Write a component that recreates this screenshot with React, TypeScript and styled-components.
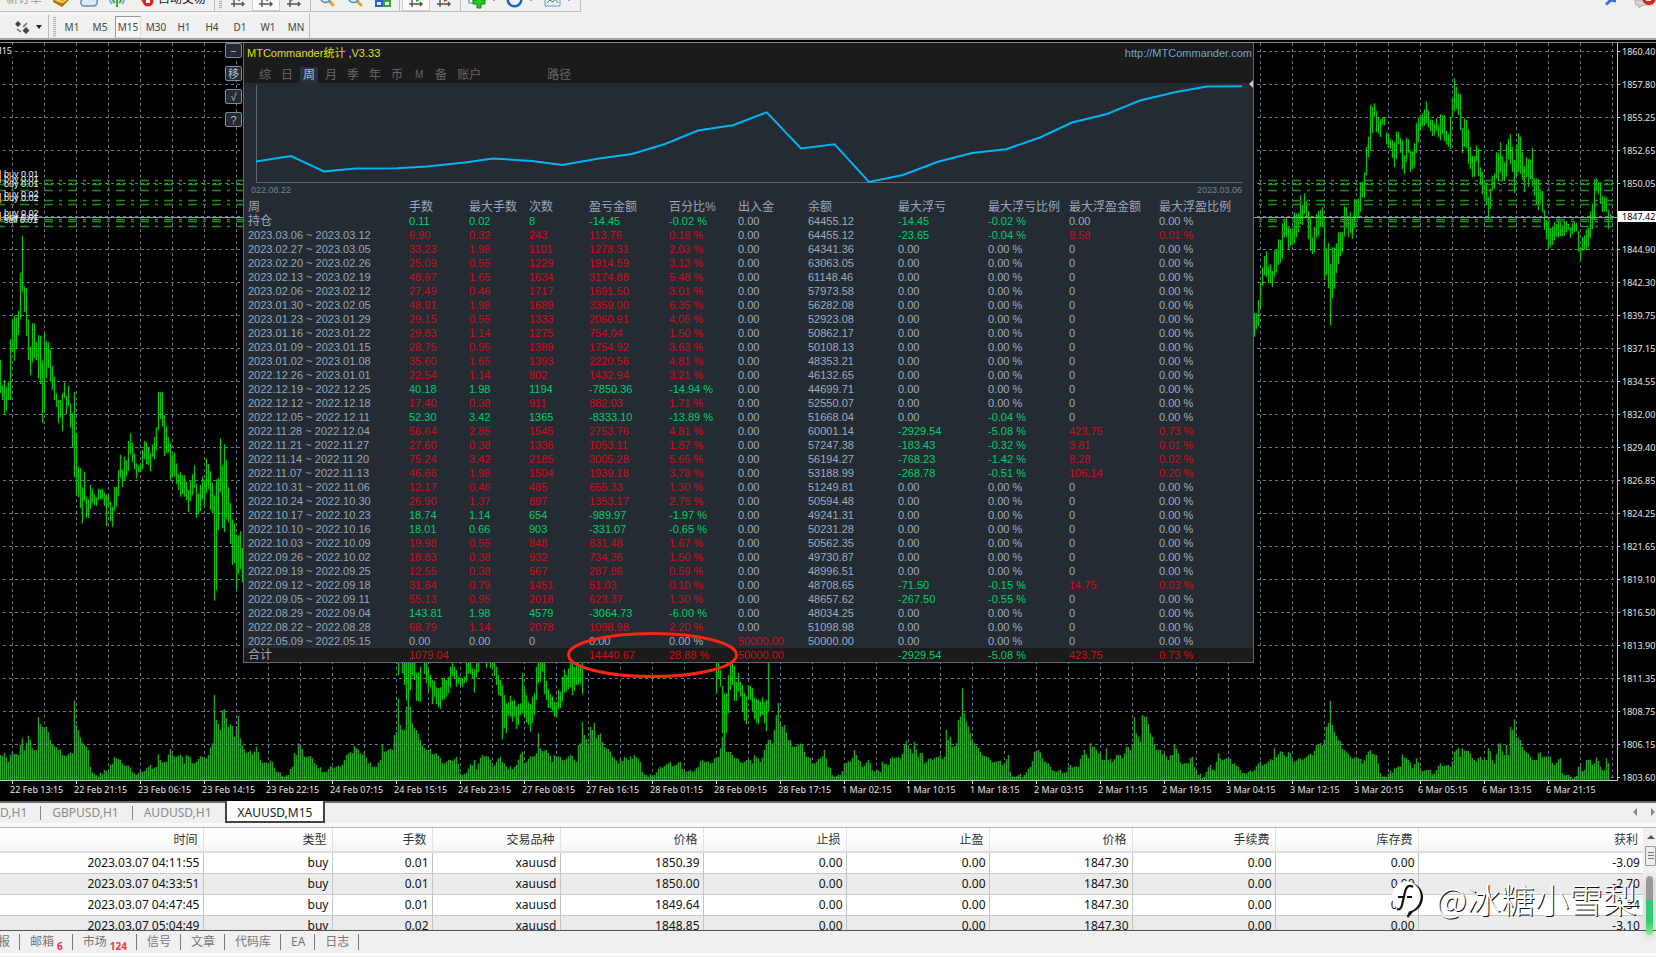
import React from "react";
import styled, { createGlobalStyle, css } from "styled-components";

const Global = createGlobalStyle`
  * { box-sizing: border-box; }
  body { margin: 0; background: #f0f0f0; overflow-x: hidden; }
  button { font: inherit; color: inherit; background: none; border: 0; padding: 0; margin: 0; }
  table { border-collapse: collapse; border-spacing: 0; }
  svg { display: block; }
`;

const uiFont = `"Noto Sans", "Noto Sans CJK SC", sans-serif`;
const panelFont = `"Liberation Sans", "Noto Sans CJK SC", sans-serif`;

/* ---------- data ---------- */

type Bar = [number, number];

/** Bars are stored as "high-low" pairs, three units to a pixel, one bar every 2px. */
const parseBars = (src: string): Bar[] =>
  src.trim().split(/\s+/).map((p) => p.split("-").map(Number) as Bar);

const barPath = (x0: number, y0: number, src: string) =>
  parseBars(src)
    .map(([hi, lo], i) => `M${x0 + i * 2 + 0.5} ${(y0 + hi / 3).toFixed(1)}V${(y0 + lo / 3).toFixed(1)}`)
    .join("");

const leftA = `960-1060 1035-1080 1020-1125 1040-1113 1025-1080 897-1080 837-935 827-963 832-927 812-885 698-837
587-755 739-815 745-888 838-960 920-1005 850-968 850-955 905-960 885-1015 887-1032 962-1148 880-1118 905-1013
905-983 928-1025 977-1050 1010-1080 1060-1100 1080-1150 1080-1133 1060-1173 1027-1075 1067-1123 1037-1098
1090-1163 1120-1225`;

const leftB = `5-262 130-315 230-322 233-355 292-400 247-334 320-384 328-384 284-357 296-340 313-346 322-348 296-330
298-328 296-328 308-348 313-408 316-345 335-393 350-411 290-363 290-350 241-317 194-265 238-292 200-273 211-259
153-243 130-193 158-217 190-237 220-265 226-247 222-247 180-238 153-208 155-223 173-225 190-244 163-202 140-208
112-182 5-120 7-88 7-110 75-198 107-190 142-187 158-273 193-262 187-260 220-283 253-300 247-320 256-312 256-320
275-330 300-367 272-333 253-316 226-293 281-384 310-372 284-364 260-328 268-350 205-310 222-298 244-360 278-370
316-632 268-600 265-420 145-307 226-414 163-427 211-388 292-396 338-462 388-526 400-520 434-598 436-552 424-538
474-577`;

const middle = `180-226 180-181 180-220 180-255 180-302 180-325 180-270 180-228 180-240 218-304 218-304 200-305 180-181
180-222 180-250 210-275 225-262 240-312 243-292 262-312 265-320 262-327 235-300 233-298 240-290 230-280 200-262
180-228 200-235 210-260 230-250 232-255 235-262 230-250 180-245 180-222 180-222 205-235 208-278 180-232 180-215
180-181 180-181 180-181 180-205 180-181 180-205 180-200 180-228 200-255 225-285 240-288 255-418 285-385 310-400
307-348 287-350 302-365 300-350 318-388 312-375 310-345 220-340 265-350 285-368 307-375 312-395 290-368 280-345
200-300 180-250 180-245 180-215 180-283 243-300 267-325 282-325 290-335 305-350 305-350 270-328 275-325 230-305
208-278 225-275 205-268 180-262 180-285 200-272 180-255 180-255 195-250 180-283`;

const middleB = `180-280 180-235 210-260 258-400 280-415 280-398 225-340 180-270 180-255 198-303 245-303 220-275
245-290 255-335 280-362 290-373 255-295 258-300 265-335 293-357 295-370 300-373 305-350 292-345 305-370 300-393
180-335`;

const right = `940-1010 940-988 900-978 845-922 802-857 768-825 754-830 797-850 793-848 812-861 750-830 748-818 718-795
720-788 670-776 660-712 655-712 679-750 685-738 685-735 637-730 640-712 640-697 586-672 615-675 580-642 604-655
634-718 655-752 713-762 680-757 643-713 634-708 630-682 622-682 650-840 745-825 728-865 793-976 742-895 742-867
730-820 697-793 697-768 697-757 619-710 622-685 655-712 637-700 655-716 598-685 598-655 596-652 547-636 545-592
517-594 440-526 410-472 314-452 320-400 310-350 333-397 353-403 358-411 352-375 353-376 397-433 403-445 418-446
421-474 427-502 394-478 396-433 413-458 421-508 465-522 413-485 418-460 452-516 454-508 430-500 370-460 352-427
347-393 340-380 328-378 304-370 332-382 358-393 360-408 370-405 355-392 376-412 343-420 346-402 344-424 392-434
402-440 350-448 294-352 235-333 260-328 280-345 283-390 385-460 355-440 361-444 388-492 440-507 468-532 468-530
436-485 446-528 502-555 517-583 540-600 553-615 590-660 565-627 527-570 521-566 457-535 460-545 427-518 468-543
487-543 433-530 416-478 403-492 442-516 480-580 433-530 400-516 410-522 457-540 498-576 472-532 478-560 478-538
445-560 535-587 535-612 538-630 568-608 573-636 630-690 660-717 664-746 685-740 679-735 667-720 672-710 655-714
667-708 675-708 664-708 664-697 672-690 682-714 670-703 664-697 668-694 694-755 742-783 712-752 706-750 688-750
684-740 634-714 611-688 538-660 535-570 547-583 547-612 588-636 590-634 592-636 630-688 643-660`;

const candlePath =
  barPath(0, 40, leftA) +
  barPath(74, 390, leftB) +
  barPath(398, 600, middle) +
  barPath(716, 600, middleB) +
  barPath(1254, 0, right);

/** Volume outline as x:top, tops in thirds of a pixel below y=600. */
const volumeKeys = `0:465 4:458 8:485 12:455 18:465 22:415 24:450 28:407 32:445 36:450 38:352 40:373 46:380 50:420 58:450
66:468 72:460 74:302 76:375 80:412 88:450 90:500 94:522 98:530 104:510 108:515 114:470 122:490 130:503 136:525
142:515 148:500 156:500 158:463 160:480 166:485 170:448 174:470 182:470 184:490 186:465 194:490 202:470 206:475
208:465 212:430 214:284 216:360 220:390 222:330 224:328 228:380 232:378 234:410 238:348 240:415 246:460 254:455
256:440 260:480 268:490 272:485 276:515 282:528 288:525 292:500 294:460 296:465 298:430 302:448 304:470 312:475
318:505 326:515 332:500 340:500 346:465 352:460 354:437 360:460 364:455 368:490 376:500 380:480 382:435 384:455
392:450 394:405 396:395 398:295 400:375 404:390 406:320 410:320 412:370 416:390 420:420 426:450 436:460 442:490
450:480 456:470 460:520 466:518 474:480 476:508 482:465 488:470 492:500 500:470 504:490 508:508 516:495 522:455
524:490 532:470 536:460 538:400 540:445 546:450 552:485 554:465 562:480 572:468 576:485 578:435 580:430 582:365
584:405 588:430 590:380 592:390 594:368 596:415 600:400 604:440 610:455 618:490 624:470 628:480 634:465 640:485
642:515 648:530 654:525 660:500 668:490 676:495 680:485 684:515 692:515 698:500 702:480 710:490 714:475 718:470
720:445 722:410 724:400 726:455 732:465 740:485 746:480 752:490 754:465 760:485 764:450 768:420 772:430 776:345
778:308 780:372 784:375 788:420 794:440 802:435 806:470 814:490 820:475 824:450 828:500 834:530 840:525 844:490
850:485 854:450 858:480 862:500 868:480 872:510 880:515 882:485 888:495 892:470 900:475 904:435 906:422 908:445
912:460 914:425 918:470 922:460 924:490 930:475 938:470 944:470 946:390 948:420 950:410 952:440 956:430 958:360
960:350 962:265 964:340 966:365 970:400 974:430 980:455 990:480 1004:490 1008:465 1010:515 1014:530 1024:525
1030:500 1034:455 1038:450 1042:475 1050:500 1056:515 1066:515 1070:495 1078:500 1082:465 1084:450 1088:475
1090:430 1094:440 1098:460 1104:480 1106:445 1108:480 1112:485 1116:465 1122:475 1126:440 1130:450 1132:436
1134:352 1136:400 1140:425 1142:345 1146:350 1150:400 1152:410 1156:450 1164:460 1168:480 1172:465 1174:433
1178:460 1180:485 1188:490 1192:470 1194:500 1198:525 1204:530 1206:515 1210:495 1214:510 1218:460 1220:475
1226:475 1234:490 1240:510 1246:520 1252:515 1258:490 1266:490 1272:480 1274:445 1276:470 1282:455 1286:470
1288:455 1294:485 1300:475 1306:470 1312:465 1316:435 1322:435 1324:420 1326:380 1328:368 1330:302 1332:375
1334:395 1338:420 1344:450 1350:470 1356:470 1362:490 1366:465 1370:450 1376:465 1380:520 1386:530 1394:505
1400:500 1402:463 1408:480 1412:505 1416:475 1420:505 1426:510 1434:520 1440:490 1450:500 1454:455 1458:443
1460:470 1462:445 1470:460 1476:485 1480:470 1486:480 1488:445 1494:490 1498:435 1500:430 1504:465 1506:435
1508:465 1510:380 1512:390 1514:358 1516:412 1520:420 1524:450 1530:470 1536:480 1538:460 1544:470 1550:470
1554:495 1560:475 1562:520 1570:530 1576:528 1578:500 1584:510 1586:480 1594:490 1596:472 1600:500 1604:510
1606:475 1608:490`;

const volumePath = (() => {
  const keys = volumeKeys.trim().split(/\s+/).map((k) => k.split(":").map(Number));
  let d = "";
  let k = 0;
  for (let x = 0; x <= 1608; x += 2) {
    while (k < keys.length - 2 && keys[k + 1][0] <= x) k += 1;
    const [xa, ya] = keys[k];
    const [xb, yb] = keys[k + 1];
    const t = Math.min(1, (x - xa) / (xb - xa));
    const ripple = t === 0 || t === 1 ? 0 : ((x * 7) % 5) * 3 - 6;
    d += `M${x + 0.5} ${(600 + (ya + (yb - ya) * t + ripple) / 3).toFixed(1)}V781`;
  }
  return d;
})();

const prices = ["1860.40", "1857.80", "1855.25", "1852.65", "1850.05", "1847.42", "1844.90", "1842.30", "1839.75",
  "1837.15", "1834.55", "1832.00", "1829.40", "1826.85", "1824.25", "1821.65", "1819.10", "1816.50", "1813.90",
  "1811.35", "1808.75", "1806.15", "1803.60"];

const times = ["22 Feb 13:15", "22 Feb 21:15", "23 Feb 06:15", "23 Feb 14:15", "23 Feb 22:15", "24 Feb 07:15",
  "24 Feb 15:15", "24 Feb 23:15", "27 Feb 08:15", "27 Feb 16:15", "28 Feb 01:15", "28 Feb 09:15", "28 Feb 17:15",
  "1 Mar 02:15", "1 Mar 10:15", "1 Mar 18:15", "2 Mar 03:15", "2 Mar 11:15", "2 Mar 19:15", "3 Mar 04:15",
  "3 Mar 12:15", "3 Mar 20:15", "6 Mar 05:15", "6 Mar 13:15", "6 Mar 21:15"];

const statColumns: [string, number][] = [["周", 165], ["手数", 60], ["最大手数", 60], ["次数", 60], ["盈亏金额", 80],
  ["百分比%", 69], ["出入金", 70], ["余额", 90], ["最大浮亏", 90], ["最大浮亏比例", 81], ["最大浮盈金额", 90],
  ["最大浮盈比例", 94]];

const statRows = `持仓|0.11|0.02|8|-14.45|-0.02|0.00|64455.12|-14.45|-0.02|0.00|0.00
2023.03.06 ~ 2023.03.12|6.80|0.32|243|113.76|0.18|0.00|64455.12|-23.65|-0.04|8.58|0.01
2023.02.27 ~ 2023.03.05|33.23|1.98|1101|1278.31|2.03|0.00|64341.36|0.00|0.00|0|0.00
2023.02.20 ~ 2023.02.26|25.09|0.55|1229|1914.59|3.13|0.00|63063.05|0.00|0.00|0|0.00
2023.02.13 ~ 2023.02.19|48.97|1.65|1634|3174.88|5.48|0.00|61148.46|0.00|0.00|0|0.00
2023.02.06 ~ 2023.02.12|27.49|0.46|1717|1691.50|3.01|0.00|57973.58|0.00|0.00|0|0.00
2023.01.30 ~ 2023.02.05|48.91|1.98|1689|3359.00|6.35|0.00|56282.08|0.00|0.00|0|0.00
2023.01.23 ~ 2023.01.29|29.15|0.55|1333|2060.91|4.05|0.00|52923.08|0.00|0.00|0|0.00
2023.01.16 ~ 2023.01.22|29.83|1.14|1275|754.04|1.50|0.00|50862.17|0.00|0.00|0|0.00
2023.01.09 ~ 2023.01.15|28.75|0.95|1389|1754.92|3.63|0.00|50108.13|0.00|0.00|0|0.00
2023.01.02 ~ 2023.01.08|35.60|1.65|1393|2220.56|4.81|0.00|48353.21|0.00|0.00|0|0.00
2022.12.26 ~ 2023.01.01|22.54|1.14|802|1432.94|3.21|0.00|46132.65|0.00|0.00|0|0.00
2022.12.19 ~ 2022.12.25|40.18|1.98|1194|-7850.36|-14.94|0.00|44699.71|0.00|0.00|0|0.00
2022.12.12 ~ 2022.12.18|17.40|0.38|911|882.03|1.71|0.00|52550.07|0.00|0.00|0|0.00
2022.12.05 ~ 2022.12.11|52.30|3.42|1365|-8333.10|-13.89|0.00|51668.04|0.00|-0.04|0|0.00
2022.11.28 ~ 2022.12.04|56.64|2.85|1545|2753.76|4.81|0.00|60001.14|-2929.54|-5.08|423.75|0.73
2022.11.21 ~ 2022.11.27|27.60|0.38|1336|1053.11|1.87|0.00|57247.38|-183.43|-0.32|3.81|0.01
2022.11.14 ~ 2022.11.20|75.24|3.42|2185|3005.28|5.65|0.00|56194.27|-768.23|-1.42|8.28|0.02
2022.11.07 ~ 2022.11.13|46.66|1.98|1504|1939.18|3.78|0.00|53188.99|-268.78|-0.51|106.14|0.20
2022.10.31 ~ 2022.11.06|12.17|0.46|485|655.33|1.30|0.00|51249.81|0.00|0.00|0|0.00
2022.10.24 ~ 2022.10.30|26.90|1.37|897|1353.17|2.75|0.00|50594.48|0.00|0.00|0|0.00
2022.10.17 ~ 2022.10.23|18.74|1.14|654|-989.97|-1.97|0.00|49241.31|0.00|0.00|0|0.00
2022.10.10 ~ 2022.10.16|18.01|0.66|903|-331.07|-0.65|0.00|50231.28|0.00|0.00|0|0.00
2022.10.03 ~ 2022.10.09|19.98|0.55|848|831.48|1.67|0.00|50562.35|0.00|0.00|0|0.00
2022.09.26 ~ 2022.10.02|18.83|0.38|932|734.36|1.50|0.00|49730.87|0.00|0.00|0|0.00
2022.09.19 ~ 2022.09.25|12.55|0.38|567|287.86|0.59|0.00|48996.51|0.00|0.00|0|0.00
2022.09.12 ~ 2022.09.18|31.64|0.79|1451|51.03|0.10|0.00|48708.65|-71.50|-0.15|14.75|0.03
2022.09.05 ~ 2022.09.11|55.13|0.95|2018|623.37|1.30|0.00|48657.62|-267.50|-0.55|0|0.00
2022.08.29 ~ 2022.09.04|143.81|1.98|4579|-3064.73|-6.00|0.00|48034.25|0.00|0.00|0|0.00
2022.08.22 ~ 2022.08.28|68.79|1.14|2078|1098.98|2.20|0.00|51098.98|0.00|0.00|0|0.00
2022.05.09 ~ 2022.05.15|0.00|0.00|0|0.00|0.00|50000.00|50000.00|0.00|0.00|0|0.00`
  .split("\n").map((r) => r.split("|"));

const totals = ["合计", "1079.04", "", "", "14440.67", "28.88", "50000.00", "", "-2929.54", "-5.08", "423.75", "0.73"];

const orderColumns: [string, number | undefined][] = [["时间", 203], ["类型", 129], ["手数", 100], ["交易品种", 128],
  ["价格", 143], ["止损", 143], ["止盈", 143], ["价格", 143], ["手续费", 143], ["库存费", 143], ["获利", undefined]];

const orders = [
  ["2023.03.07 04:11:55", "buy", "0.01", "xauusd", "1850.39", "0.00", "0.00", "1847.30", "0.00", "0.00", "-3.09"],
  ["2023.03.07 04:33:51", "buy", "0.01", "xauusd", "1850.00", "0.00", "0.00", "1847.30", "0.00", "0.00", "-2.70"],
  ["2023.03.07 04:47:45", "buy", "0.01", "xauusd", "1849.64", "0.00", "0.00", "1847.30", "0.00", "0.00", "-2.34"],
  ["2023.03.07 05:04:49", "buy", "0.02", "xauusd", "1848.85", "0.00", "0.00", "1847.30", "0.00", "0.00", "-3.10"],
];

/* ---------- layout ---------- */

const Page = styled.div`
  min-height: 100vh;
  overflow: hidden;
  background: #f0f0f0;
  font-family: ${uiFont};
  font-size: 12px;
  color: #333;
`;

const TopBar = styled.header`
  display: flex;
  justify-content: space-between;
  height: 13px;
  overflow: hidden;
`;

const ToolStrip = styled.div`
  display: flex;
  border: solid #bdbdbd;
  border-width: 0 1px 1px 0;
  height: 12px;
  padding: 0 3px 0 6px;
`;

const ToolRow = styled.div`
  display: flex;
  align-items: center;
  height: 24px;
  margin-top: -13px;
`;

const ToolText = styled.button<{ $muted?: boolean }>`
  display: block;
  line-height: 16px;
  white-space: nowrap;
  margin: ${(p) => (p.$muted ? "0 5px 0 0" : "0 6px 0 -1px")};
  color: ${(p) => (p.$muted ? "#9a9a9a" : "#222")};
`;

const ToolButton = styled.button<{ $wide?: boolean; $pressed?: boolean }>`
  display: flex;
  align-items: center;
  justify-content: center;
  gap: 5px;
  width: ${(p) => (p.$wide ? 38 : 28)}px;
  height: 24px;
  ${(p) => p.$pressed && css`background: #fafafa; border: 1px solid #ccc;`}
`;

const Divider = styled.span<{ $grip?: boolean }>`
  flex: none;
  width: ${(p) => (p.$grip ? 3 : 1)}px;
  height: ${(p) => (p.$grip ? 20 : 24)}px;
  margin: 0 2px;
  background: ${(p) => (p.$grip ? "repeating-linear-gradient(#bbb 0 1px, #e2e2e2 1px 2px)" : "#bbb")};
`;

const CornerTools = styled.div`
  display: flex;
  gap: 16px;
  height: 10px;
`;

const PeriodBar = styled.nav`
  display: flex;
  align-items: center;
  height: 25px;
  padding: 1px 0 0 12px;
  width: 310px;
  border-right: 1px solid #bdbdbd;
  border-top: 1px solid #fbfbfb;
`;

const PeriodButton = styled.button<{ $active?: boolean }>`
  flex: none;
  width: ${(p) => (p.$active ? 26 : 28)}px;
  margin: ${(p) => (p.$active ? "0 1px" : "0")};
  height: 22px;
  font-size: 10px;
  line-height: 20px;
  color: #444;
  text-align: center;
  ${(p) => p.$active && css`background: #f8f8f8; border: 1px solid #aaa; border-color: #999 #ddd #ddd #999;`}
`;

const ShapeTool = styled.button`
  display: flex;
  flex: none;
  align-items: center;
  gap: 4px;
  margin-right: 4px;
`;

const ChartFrame = styled.main`
  border-top: 2px solid #a2a2a2;
  background: #000;
  padding-top: 2px;
`;

const ChartBody = styled.div`
  display: flex;
  border-top: 1px solid #8c8c8c;
  height: 739px;
`;

const Plot = styled.div`
  position: relative;
  flex: 1;
  min-width: 0;
  overflow: hidden;
  border-bottom: 1px solid #c8c8c8;
`;

const PriceAxis = styled.div`
  width: 39px;
  border-left: 1px solid #c8c8c8;
  overflow: hidden;
  color: #e6e6e6;
  font-size: 9px;
`;

const PriceList = styled.ul`
  list-style: none;
  margin: -8px 0 0;
  padding: 0;
`;

const Price = styled.li<{ $current?: boolean }>`
  display: flex;
  align-items: center;
  height: 33px;
  gap: 2px;
  &::before { content: ""; width: 2px; height: 1px; background: #c8c8c8; }
  span {
    line-height: 11px;
    ${(p) => p.$current && css`background: #fff; color: #000; box-shadow: -4px 0 0 #fff, 2px 0 0 #fff;`}
  }
`;

const TimeAxis = styled.ol`
  display: flex;
  list-style: none;
  margin: 0;
  padding: 0 0 0 10px;
  height: 20px;
  overflow: hidden;
  color: #e6e6e6;
  font-size: 9px;
`;

const Time = styled.li`
  flex: 0 0 64px;
  line-height: 11px;
  white-space: nowrap;
  &::before { content: ""; display: block; width: 1px; height: 3px; margin-left: 2px; background: #c8c8c8; }
`;

const SideButtons = styled.div`
  position: absolute;
  left: 225px;
  top: 0;
  display: grid;
  grid-auto-rows: 15px;
  gap: 8px;
`;

const SideButton = styled.button`
  width: 17px;
  border: 1px solid #7d8ca3;
  border-radius: 2px;
  background: #242b33;
  color: #b4bfcf;
  font: 11px/12px ${panelFont};
`;

const Panel = styled.section`
  position: absolute;
  left: 243px;
  top: 0;
  width: 1011px;
  background: #242b33;
  border: solid #5c687a;
  border-width: 0 1px 1px;
  color: #9aa7bc;
  font: 11px/14px ${panelFont};
`;

const PanelHead = styled.div`
  height: 40px;
  background: #1b1b1b;
`;

const PanelTitle = styled.div`
  display: flex;
  justify-content: space-between;
  padding: 0 1px 0 3px;
  line-height: 20px;
  height: 24px;
  color: #e0e000;
  a { color: #6fa8cc; text-decoration: none; }
`;

const PanelTabs = styled.div`
  display: flex;
  gap: 4px;
  padding-left: 12px;
`;

const PanelTab = styled.button<{ $active?: boolean; $small?: boolean; $gap?: number }>`
  min-width: 18px;
  height: 16px;
  border-radius: 2px;
  padding: 0 3px;
  margin-left: ${(p) => p.$gap ?? 0}px;
  font-size: ${(p) => (p.$small ? 10 : 12)}px;
  line-height: 16px;
  background: ${(p) => (p.$active ? "#28323e" : "none")};
  color: ${(p) => (p.$active ? "#a9bcda" : "#666")};
`;

const Equity = styled.svg`
  overflow: visible;
`;

const DateRange = styled.div`
  display: flex;
  justify-content: space-between;
  height: 16px;
  padding: 0 11px 0 7px;
  font-size: 9px;
  line-height: 13px;
  color: #758296;
`;

const StatTable = styled.table`
  table-layout: fixed;
  width: 100%;
  th, td { height: 14px; line-height: 14px; padding: 0; text-align: left; font-weight: 400; white-space: nowrap; overflow: visible; }
  th { font-size: 12px; }
  tbody th { font-size: 11px; }
  th:first-child { padding-left: 4px; }
  tr { height: 14px; }
  tfoot tr { background: #1b1b1b; }
`;

const cjkSize = css`&& { font-size: 12px; }`;
const RowHead = styled.th<{ $cjk?: boolean }>`${(p) => p.$cjk && cjkSize}`;

const toneColor = { gain: "#d00d16", loss: "#00cf68", flat: "#9fabbf" };
type Tone = keyof typeof toneColor;
const Cell = styled.td<{ $tone: Tone }>`color: ${(p) => toneColor[p.$tone]};`;

const Mark = styled.svg`
  position: absolute;
  left: 566px;
  top: 588px;
`;

const ChartTabs = styled.nav`
  display: flex;
  height: 26px;
  border-top: 2px solid #6a6a6a;
  box-shadow: inset 0 -4px 0 #f9f9f9;
  color: #8a8a8a;
`;

const ChartTab = styled.button<{ $active?: boolean }>`
  height: 20px;
  line-height: 20px;
  padding: 0 13px 0 0;
  display: flex;
  align-items: center;
  &:not(:first-child)::before { content: ""; width: 1px; height: 14px; background: #888; margin-right: 11px; }
  ${(p) => p.$active && css`
    &&::before { display: none; }
    height: 22px;
    margin-top: -2px;
    padding: 3px 11px 0;
    background: #fff;
    color: #222;
    border: solid #444;
    border-width: 0 2px 2px;
  `}
`;

const TabArrows = styled.div`
  margin-left: auto;
  display: flex;
  gap: 14px;
  padding: 3px 1px 0 0;
  height: 14px;
  align-items: center;
`;

const Terminal = styled.section`
  position: relative;
`;

const OrdersView = styled.div`
  display: flex;
  height: 104px;
  overflow: hidden;
  border-top: 1px solid #b5b5b5;
  border-bottom: 1px solid #555;
`;

const OrderTable = styled.table`
  table-layout: fixed;
  flex: 1;
  width: 100%;
  min-width: 0;
  height: 108px;
  color: #111;
  th, td { padding: 0; text-align: right; font-weight: 400; white-space: nowrap; border-right: 1px solid #c4c4c4; }
  th { height: 24px; line-height: 23px; padding-right: 5px; color: #333; background: linear-gradient(#fff 45%, #f2f4f6); border-right-color: #e2e4e6; border-bottom: 2px solid #dcdcdc; }
  td { height: 21px; line-height: 20px; padding-right: 3px; background: #fff; border-bottom: 1px solid #c9c9c9; }
  tbody tr:nth-child(even) td { background: #ebebeb; }
  th:last-child, td:last-child { border-right: 0; }
`;

const ScrollColumn = styled.div`
  flex: 0 0 13px;
  background: #f0f0f0;
  display: flex;
  flex-direction: column;
  align-items: center;
  padding-left: 2px;
`;

const ScrollThumb = styled.div`
  width: 11px;
  height: 20px;
  border: 1px solid #999;
  border-radius: 1px;
  margin-top: 6px;
  background: repeating-linear-gradient(#777 0 1px, #eee 1px 3px) center / 6px 8px no-repeat, #eee;
`;

const Level = styled.div`
  position: absolute;
  right: 3px;
  top: 49px;
  width: 7px;
  height: 59px;
  border-radius: 4px;
  background: linear-gradient(#999 0 24px, #2ecc71 24px 45px, #86ee80 100%);
  box-shadow: 0 2px 8px #0003;
`;

const Watermark = styled.div`
  position: absolute;
  right: 19px;
  top: 53px;
  display: flex;
  align-items: center;
  gap: 12px;
  font: 300 34px/36px "Noto Sans CJK SC", sans-serif;
  color: #fff;
  text-shadow: 1px 1px 0 #111;
  pointer-events: none;
`;

const BottomTabs = styled.nav`
  display: flex;
  align-items: center;
  height: 22px;
  color: #777;
`;

const BottomTab = styled.button`
  display: flex;
  align-items: center;
  height: 16px;
  line-height: 16px;
  padding: 0 9px 0 10px;
  gap: 3px;
  border-right: 1px solid #777;
  white-space: nowrap;
  &:first-child { padding-left: 0; margin-left: -2px; }
  b { color: #f23645; font-size: 10px; line-height: 8px; align-self: flex-end; }
`;

const FootStrip = styled.div`
  height: 3px;
  background: #fafafa;
`;

/* ---------- drawings ---------- */

const Caret = () => <svg width="6" height="4" viewBox="0 0 6 4"><path d="M0 0h6L3 4z" fill="#222" /></svg>;

const BookIcon = () => (
  <svg width="18" height="16" viewBox="0 0 18 16"><path d="M1 9l8-6 8 4-7 8z" fill="#e0a526" /><path d="M1 9l9 4 7-6v2l-7 7-9-5z" fill="#b0700f" /><path d="M2 8l9 3 6-4" stroke="#ffe38a" fill="none" /></svg>
);
const CloudIcon = () => (
  <svg width="18" height="16" viewBox="0 0 18 16"><path d="M4.500 15a3.500 3.500 0 01-.5-7 4.500 4.500 0 019-1 4 4 0 01.5 8z" fill="#dbe7f3" stroke="#6a8fb8" strokeWidth="1.5" /></svg>
);
const SignalIcon = () => (
  <svg width="18" height="16" viewBox="0 0 18 16" fill="none"><path d="M4 13a7 7 0 010-10M14 13a7 7 0 000-10" stroke="#7db6dd" strokeWidth="2" /><path d="M7 12a5 5 0 010-8M11 12a5 5 0 000-8M9 7v9" stroke="#3da83d" strokeWidth="2" /></svg>
);
const AutoTradeIcon = () => (
  <svg width="18" height="16" viewBox="0 0 18 16"><path d="M1 5l9-4v13z" fill="#e8b53a" stroke="#b98512" /><circle cx="12" cy="10" r="5.5" fill="#dc2418" /><path d="M10 8h4v4h-4z" fill="#fff" /></svg>
);
const BarsIcon = ({ mark }: { mark: string }) => (
  <svg width="16" height="16" viewBox="0 0 16 16" fill="none"><path d="M4 1v15M1 13h13M12 11l2 2-2 2" stroke="#555" strokeWidth="1.4" /><path d={mark} stroke="#2f9e2f" strokeWidth="2" /></svg>
);
const LensIcon = () => (
  <svg width="16" height="16" viewBox="0 0 16 16"><path d="M9 9l5 5" stroke="#d9a42b" strokeWidth="3" strokeLinecap="round" /><circle cx="6.500" cy="6.500" r="5" fill="#dceffc" stroke="#4e86c4" strokeWidth="1.5" /></svg>
);
const TilesIcon = () => (
  <svg width="16" height="16" viewBox="0 0 16 16"><path d="M0 1h8v7H0z" fill="#4a9e3a" /><path d="M8 1h8v7H8z" fill="#2f5fd0" /><path d="M0 8h8v8H0z" fill="#2f5fd0" /><path d="M8 8h8v8H8z" fill="#3f9e2f" /><path d="M2 11h4v3H2zM10 11h4v3h-4z" fill="#e6f0fa" /></svg>
);
const ShiftIcon = ({ color }: { color: string }) => (
  <svg width="16" height="16" viewBox="0 0 16 16" fill="none"><path d="M4 1v15M1 13h13M12 11l2 2-2 2" stroke="#555" strokeWidth="1.4" /><path d="M8 6l4 3-4 2z" fill={color} /></svg>
);
const PlusIcon = () => (
  <svg width="18" height="20" viewBox="0 0 18 20"><path d="M1 2h9v12H1z" fill="#fff" stroke="#777" /><path d="M9 7h4v4h4v4h-4v4H9v-4H5v-4h4z" fill="#22d022" stroke="#128212" /></svg>
);
const ClockIcon = () => (
  <svg width="17" height="17" viewBox="0 0 17 17"><circle cx="8.500" cy="8.500" r="6.800" fill="#e9f3fd" stroke="#1f61b8" strokeWidth="2.500" /></svg>
);
const TemplateIcon = () => (
  <svg width="17" height="16" viewBox="0 0 17 16" fill="none"><path d="M1 1h15v14H1z" fill="#e7f1fa" stroke="#6f98c2" /><path d="M3 12l3-3 3 2 2-3 3 4" stroke="#3d9a4b" /></svg>
);

const EquityCurve = () => (
  <Equity width="1009" height="101" viewBox="244 83 1009 101">
    <path d="M256.500 85V182.500H1242" fill="none" stroke="#63656b" />
    <path
      d="M256 161.500L291 156 324 171.500 355 168.600 397 168.300 427 166.500 465 162.500 493 158.500 532 161 562 165 599 158.500 632 154 665 144 698 130.500 733 125.300 766.700 112.300 801 148.500 834.500 144.200 869 182 903 175 938 161.700 972 153 1006 149.200 1040 137.500 1072 122.500 1107 114 1140 100.500 1176 92 1207 86.500 1242 86.300"
      fill="none" stroke="#00b4f5" strokeWidth="2"
    />
    <path d="M1253 80v8l-4-4z" fill="#c8c8c8" />
  </Equity>
);

const gridX = Array.from({ length: 80 }, (_, i) => 12.5 + i * 32);
const gridY = prices.map((_, i) => 51.5 + i * 33);
const orderLevels = [180, 184, 190, 200, 204, 219, 221, 226];

const PriceChart = () => (
  <svg width="100%" height="738" aria-label="XAUUSD M15">
    <g transform="translate(0 -43)">
      <path d={volumePath} stroke="#24a324" strokeWidth="1.5" />
      <g stroke="#66758a" strokeDasharray="3 3">
        {gridX.map((x) => <line key={x} x1={x} x2={x} y1="43" y2="781" />)}
        {gridY.map((y) => <line key={y} x1="3" x2="100%" y1={y} y2={y} />)}
      </g>
      <path d={candlePath} stroke="#00c800" strokeWidth="1.3" />
      <g stroke="#1c901c" strokeWidth="1.500" strokeDasharray="9 6 3 6" strokeDashoffset="4">
        {orderLevels.map((y) => <line key={y} x1="0" x2="100%" y1={y + 0.5} y2={y + 0.5} />)}
      </g>
      <line x1="0" x2="100%" y1="217.500" y2="217.500" stroke="#8d9aad" />
      <path d="M0 170v13M0 193v10M0 212v9" stroke="#e08a2c" strokeWidth="2" />
      <rect width="13" height="12" y="45" />
      <g fill="#f2f2f2" fontSize="9" fontFamily="Liberation Sans, sans-serif">
        <text x="12" y="54" textAnchor="end" fontFamily="Noto Sans, sans-serif">M15</text>
        <text x="4" y="177">buy 0.01</text>
        <text x="4" y="182">buy 0.01</text>
        <text x="4" y="187">buy 0.01</text>
        <text x="4" y="197">buy 0.02</text>
        <text x="4" y="201">buy 0.02</text>
        <text x="4" y="216">buy 0.02</text>
        <text x="4" y="220">buy 0.01</text>
        <text x="4" y="223">sell 0.01</text>
      </g>
    </g>
  </svg>
);

const BrandMark = () => (
  <svg width="34" height="38" viewBox="0 0 34 38">
    <path d="M18 2a15.500 15.500 0 015 30L18 38l-3-5z" fill="#111" />
    <path d="M16 1a15.500 15.500 0 013 30.500L17 36l-3-4.500A15.500 15.500 0 0116 1z" fill="#fff" />
    <path d="M23 7c-4-3-7 0-8 5l-3 13c-1 4-3 5-5 4M8 17h5M17 17h5" fill="none" stroke="#111" strokeWidth="2.200" />
  </svg>
);

/* ---------- page ---------- */

const sign = (v: string): Tone => (parseFloat(v) > 0 ? "gain" : parseFloat(v) < 0 ? "loss" : "flat");

const toneOf = (row: string[], i: number): Tone => {
  if (i <= 5) return sign(row[4]);
  if (i === 7) return "flat";
  return sign(row[i]);
};

const StatRow = ({ row }: { row: string[] }) => (
  <tr>
    <RowHead scope="row" $cjk={!/\d/.test(row[0])}>{row[0]}</RowHead>
    {row.slice(1).map((v, i) => {
      const col = i + 1;
      const percent = v !== "" && (col === 5 || col === 9 || col === 11);
      return <Cell key={col} $tone={toneOf(row, col)}>{percent ? `${v} %` : v}</Cell>;
    })}
  </tr>
);

const panelTabs = ["综", "日", "周", "月", "季", "年", "币", "M", "备", "账户"];
const periods = ["M1", "M5", "M15", "M30", "H1", "H4", "D1", "W1", "MN"];

export default function App() {
  return (
    <Page>
      <Global />
      <TopBar>
        <ToolStrip>
          <ToolRow>
            <ToolText $muted>新订单</ToolText>
            <ToolButton aria-label="市场"><BookIcon /></ToolButton>
            <ToolButton aria-label="云"><CloudIcon /></ToolButton>
            <ToolButton aria-label="信号"><SignalIcon /></ToolButton>
            <ToolButton aria-label="自动交易开关"><AutoTradeIcon /></ToolButton>
            <ToolText>自动交易</ToolText>
            <Divider /><Divider $grip />
            <ToolButton aria-label="柱状图"><BarsIcon mark="M9 2v8" /></ToolButton>
            <ToolButton aria-label="蜡烛图" $pressed><BarsIcon mark="M9 1v9M7 5h4v3H7z" /></ToolButton>
            <ToolButton aria-label="折线图"><BarsIcon mark="M5 10q4-7 8-2" /></ToolButton>
            <Divider />
            <ToolButton aria-label="放大"><LensIcon /></ToolButton>
            <ToolButton aria-label="缩小"><LensIcon /></ToolButton>
            <ToolButton aria-label="平铺"><TilesIcon /></ToolButton>
            <Divider />
            <ToolButton aria-label="自动滚动" $pressed><ShiftIcon color="#2f9e2f" /></ToolButton>
            <ToolButton aria-label="图表平移"><ShiftIcon color="#c0392b" /></ToolButton>
            <Divider />
            <ToolButton $wide aria-label="指标"><PlusIcon /><Caret /></ToolButton>
            <ToolButton $wide aria-label="周期"><ClockIcon /><Caret /></ToolButton>
            <ToolButton $wide aria-label="模板"><TemplateIcon /><Caret /></ToolButton>
          </ToolRow>
        </ToolStrip>
        <CornerTools>
          <svg width="14" height="6" viewBox="0 0 14 6"><path d="M2 4.500L7 0M6 0l6 1" stroke="#3b6fd6" strokeWidth="3" /></svg>
          <svg width="22" height="9" viewBox="0 0 22 9"><path d="M1 0h18v5H9L5 8V5H2z" fill="#d5d5d8" stroke="#aaa" /><circle cx="15" cy="-2" r="7" fill="#dc2418" /><path d="M12 0h5" stroke="#fff" strokeWidth="2" /></svg>
        </CornerTools>
      </TopBar>
      <PeriodBar>
        <ShapeTool aria-label="箭头">
          <svg width="20" height="16" viewBox="0 0 20 16"><path d="M6 2l3 3-3 3-3-3zM14 8l3.500 3.500L14 15l-3.500-3.500z" fill="#444" /><path d="M5 10l4 3M11 8l4-4" stroke="#666" strokeWidth="1.500" /></svg>
          <Caret />
        </ShapeTool>
        <Divider /><Divider $grip />
        {periods.map((p) => <PeriodButton key={p} $active={p === "M15"}>{p}</PeriodButton>)}
      </PeriodBar>

      <ChartFrame>
        <ChartBody>
          <Plot>
            <PriceChart />
            <SideButtons>
              {["−", "移", "√", "?"].map((t) => <SideButton key={t}>{t}</SideButton>)}
            </SideButtons>
            <Panel>
              <PanelHead>
                <PanelTitle>
                  <span>MTCommander统计 ,V3.33</span>
                  <a href="http://MTCommander.com">http://MTCommander.com</a>
                </PanelTitle>
                <PanelTabs>
                  {panelTabs.map((t) => <PanelTab key={t} $active={t === "周"} $small={t === "M"}>{t}</PanelTab>)}
                  <PanelTab $gap={56}>路径</PanelTab>
                </PanelTabs>
              </PanelHead>
              <EquityCurve />
              <DateRange><span>022.08.22</span><span>2023.03.06</span></DateRange>
              <StatTable>
                <colgroup>{statColumns.map(([n, w]) => <col key={n} width={w} />)}</colgroup>
                <thead><tr>{statColumns.map(([n]) => <th key={n} scope="col">{n}</th>)}</tr></thead>
                <tbody>{statRows.map((r) => <StatRow key={r[0]} row={r} />)}</tbody>
                <tfoot><StatRow row={totals} /></tfoot>
              </StatTable>
            </Panel>
            <Mark width="174" height="48" viewBox="0 0 174 48">
              <ellipse cx="86.500" cy="24" rx="84" ry="21.500" fill="none" stroke="#ff2414" strokeWidth="3" />
            </Mark>
          </Plot>
          <PriceAxis>
            <PriceList>
              {prices.map((p) => <Price key={p} $current={p === "1847.42"}><span>{p}</span></Price>)}
            </PriceList>
          </PriceAxis>
        </ChartBody>
        <TimeAxis>{times.map((t) => <Time key={t}>{t}</Time>)}</TimeAxis>
      </ChartFrame>

      <ChartTabs>
        <ChartTab>D,H1</ChartTab>
        <ChartTab>GBPUSD,H1</ChartTab>
        <ChartTab>AUDUSD,H1</ChartTab>
        <ChartTab $active>XAUUSD,M15</ChartTab>
        <TabArrows>
          <svg width="4" height="8" viewBox="0 0 4 8"><path d="M4 0v8L0 4z" fill="#888" /></svg>
          <svg width="4" height="8" viewBox="0 0 4 8"><path d="M0 0v8l4-4z" fill="#888" /></svg>
        </TabArrows>
      </ChartTabs>

      <Terminal>
        <OrdersView>
          <OrderTable>
            <colgroup>{orderColumns.map(([, w], i) => <col key={i} width={w} />)}</colgroup>
            <thead><tr>{orderColumns.map(([n], i) => <th key={i} scope="col">{n}</th>)}</tr></thead>
            <tbody>
              {orders.map((o) => <tr key={o[0]}>{o.map((v, i) => <td key={i}>{v}</td>)}</tr>)}
            </tbody>
          </OrderTable>
          <ScrollColumn>
            <svg width="8" height="12" viewBox="0 0 8 12"><path d="M4 7l4 4H0z" fill="#555" /></svg>
            <ScrollThumb />
          </ScrollColumn>
        </OrdersView>
        <Level />
        <Watermark><BrandMark /><span>@冰糖小雪梨</span></Watermark>
      </Terminal>
      <BottomTabs>
        <BottomTab>报</BottomTab>
        <BottomTab>邮箱<b>6</b></BottomTab>
        <BottomTab>市场<b>124</b></BottomTab>
        <BottomTab>信号</BottomTab>
        <BottomTab>文章</BottomTab>
        <BottomTab>代码库</BottomTab>
        <BottomTab>EA</BottomTab>
        <BottomTab>日志</BottomTab>
      </BottomTabs>
      <FootStrip />
    </Page>
  );
}
